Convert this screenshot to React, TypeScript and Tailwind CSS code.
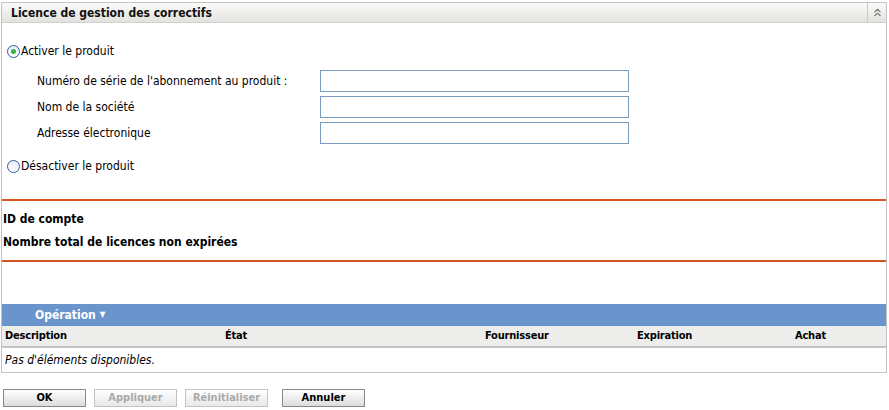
import { ChevronsUp } from 'lucide-react';

const font = { fontFamily: '"DejaVu Sans Condensed", "DejaVu Sans", sans-serif' };

function Radio({ checked }: { checked?: boolean }) {
  return (
    <span className="inline-flex w-[13px] h-[13px] rounded-full border border-[#2f5c9c] bg-gradient-to-b from-[#e8eef6] to-white items-center justify-center mr-[1px]">
      {checked && <span className="w-[5px] h-[5px] rounded-full bg-[#3cb043]" />}
    </span>
  );
}

function Field({ label }: { label: string }) {
  return (
    <div className="flex items-center h-[26px]">
      <span className="w-[318px] pl-[35px] shrink-0 whitespace-nowrap">{label}</span>
      <input className="w-[309px] h-[22px] border border-[#7a9cbc] bg-white outline-none" />
    </div>
  );
}

export default function App() {
  const cols = [
    { label: 'Description', w: 'w-[223px] pl-[3px]' },
    { label: 'État', w: 'w-[260px]' },
    { label: 'Fournisseur', w: 'w-[152px]' },
    { label: 'Expiration', w: 'w-[158px]' },
    { label: 'Achat', w: 'flex-1' },
  ];

  return (
    <div className="w-[889px] h-[410px] bg-white text-[12px] leading-[16px] text-black overflow-hidden" style={font}>
      <div className="pt-[2px] pl-[1px]">
        <div className="border border-[#c3c3bf] w-[886px]">
          <div className="flex h-[20px] bg-gradient-to-b from-[#fbfbfa] to-[#e2e3df] border-b border-[#d0d0cc]">
            <div className="flex-1 pl-[9px] font-bold flex items-center text-[#111]">Licence de gestion des correctifs</div>
            <div className="w-[19px] border-l border-[#c9c9c5] flex items-center justify-center">
              <ChevronsUp className="w-[13px] h-[13px] text-[#777]" strokeWidth={2} />
            </div>
          </div>

          <div className="pl-[5px] pt-[20px] flex items-center">
            <Radio checked />
            <span>Activer le produit</span>
          </div>
          <div className="mt-[9px]">
            <Field label="Numéro de série de l'abonnement au produit :" />
            <Field label="Nom de la société" />
            <Field label="Adresse électronique" />
          </div>
          <div className="pl-[5px] pt-[12px] flex items-center">
            <Radio />
            <span>Désactiver le produit</span>
          </div>

          <div className="mt-[25px] border-t-2 border-[#d4561e]" />
          <div className="pl-[1px] pt-[7px] font-bold leading-[23px]">
            <div>ID de compte</div>
            <div>Nombre total de licences non expirées</div>
          </div>
          <div className="mt-[6px] border-t-2 border-[#d4561e]" />

          <div className="mt-[42px] h-[22px] bg-[#6a95cc] flex items-center pl-[33px] text-white font-bold">
            Opération
            <span className="ml-[4px] text-[8px]">▼</span>
          </div>
          <div className="flex h-[22px] bg-[#ededeb] border-b-2 border-[#c3c3bf] items-center font-bold text-[11px] tracking-[-0.2px]">
            {cols.map((c) => (
              <div key={c.label} className={c.w}>{c.label}</div>
            ))}
          </div>
          <div className="h-[24px] flex items-center pl-[3px] italic">Pas d'éléments disponibles.</div>
        </div>
      </div>

      <div className="flex mt-[16px] pl-[3px] gap-[8px] font-bold text-[11px]">
        <button className="w-[83px] h-[18px] border border-[#888] bg-gradient-to-b from-white to-[#dcdcdc] flex items-center justify-center">OK</button>
        <button className="w-[83px] h-[18px] border border-[#c3c3c3] bg-gradient-to-b from-white to-[#e8e8e8] text-[#aaa] flex items-center justify-center">Appliquer</button>
        <button className="w-[83px] h-[18px] border border-[#c3c3c3] bg-gradient-to-b from-white to-[#e8e8e8] text-[#aaa] flex items-center justify-center">Réinitialiser</button>
        <button className="w-[83px] h-[18px] border border-[#888] bg-gradient-to-b from-white to-[#dcdcdc] flex items-center justify-center ml-[6px]">Annuler</button>
      </div>
    </div>
  );
}
